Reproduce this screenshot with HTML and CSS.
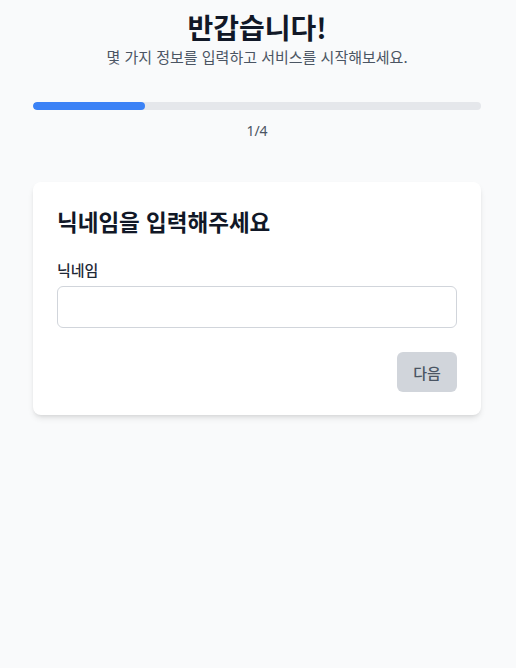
FILE: index.html
```html
<!DOCTYPE html>
<html lang="ko">
<head>
<meta charset="utf-8">
<link rel="stylesheet" href="styles.css">
</head>
<body>
<main class="page">
  <header class="intro">
    <h1 class="intro-title">반갑습니다!</h1>
    <p class="intro-sub">몇 가지 정보를 입력하고 서비스를 시작해보세요.</p>
  </header>
  <section class="progress">
    <div class="progress-track"><div class="progress-fill" style="width:25%"></div></div>
    <div class="progress-label">1/4</div>
  </section>
  <section class="card">
    <h2 class="card-title">닉네임을 입력해주세요</h2>
    <label class="field-label" for="nick">닉네임</label>
    <input class="field-input" id="nick" type="text">
    <div class="actions">
      <button class="btn-next" type="button" disabled>다음</button>
    </div>
  </section>
</main>
</body>
</html>
```
FILE: styles.css
```css
* { box-sizing: border-box; }
html, body { margin: 0; padding: 0; }
body {
  background: #f9fafb;
  font-family: "Noto Sans CJK KR", "Noto Sans", sans-serif;
  color: #111827;
  width: 516px;
  height: 668px;
}
.page {
  width: 448px;
  margin-left: 33px;
  padding-top: 8px;
}
.intro { text-align: center; }
.intro-title {
  margin: 0;
  font-size: 28px;
  font-weight: 700;
  line-height: 38px;
  color: #111827;
}
.intro-sub {
  margin: 1px 0 0;
  font-size: 15px;
  line-height: 20px;
  color: #4b5563;
}
.progress { margin-top: 35px; }
.progress-track {
  height: 8px;
  background: #e5e7eb;
  border-radius: 4px;
  overflow: hidden;
}
.progress-fill {
  height: 100%;
  background: #3b82f6;
  border-radius: 4px;
}
.progress-label {
  margin-top: 11px;
  text-align: center;
  font-family: "Noto Sans", sans-serif;
  font-size: 14px;
  line-height: 20px;
  color: #4b5563;
}
.card {
  margin-top: 41px;
  background: #fff;
  border-radius: 8px;
  box-shadow: 0 4px 6px -1px rgba(0,0,0,0.1), 0 2px 4px -2px rgba(0,0,0,0.1);
  padding: 25px 24px 23px;
  display: flex;
  flex-direction: column;
}
.card-title {
  margin: 0 0 25px;
  font-size: 22.5px;
  font-weight: 700;
  line-height: 28px;
}
.field-label {
  font-size: 15px;
  font-weight: 500;
  line-height: 20px;
  color: #1f2937;
  margin-bottom: 6px;
}
.field-input {
  height: 42px;
  border: 1px solid #d1d5db;
  border-radius: 6px;
  padding: 0 12px;
  font-size: 16px;
  font-family: inherit;
}
.actions {
  margin-top: 24px;
  display: flex;
  justify-content: flex-end;
}
.btn-next {
  width: 60px;
  height: 40px;
  border: none;
  border-radius: 6px;
  background: #d1d5db;
  color: #4b5563;
  font-family: inherit;
  font-size: 15px;
  font-weight: 500;
}
```
